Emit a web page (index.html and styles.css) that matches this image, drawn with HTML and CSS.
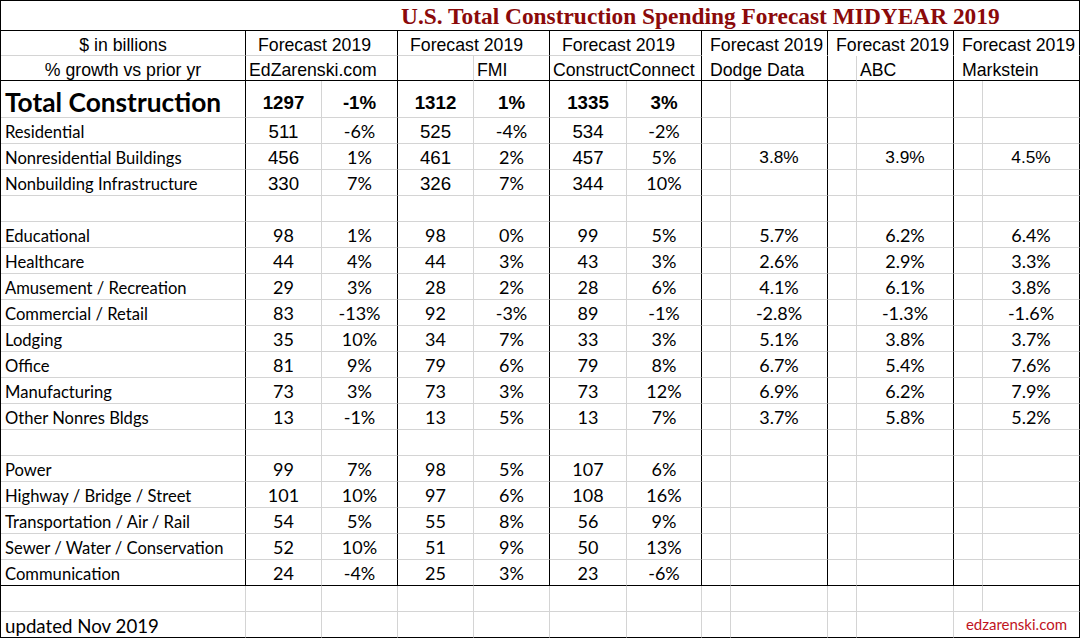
FILE: index.html
```html
<!DOCTYPE html>
<html>
<head>
<meta charset="utf-8">
<title>U.S. Total Construction Spending Forecast MIDYEAR 2019</title>
<link rel="stylesheet" href="styles.css">
</head>
<body>
<div class="sheet">
  <div class="row">
    <div class="c tpad"></div>
    <div class="c title">U.S. Total Construction Spending Forecast MIDYEAR 2019</div>
  </div>
  <div class="row head1">
    <div class="c h hl">$ in billions</div>
    <div class="c h g2 pl12">Forecast 2019</div>
    <div class="c h g2 pl12">Forecast 2019</div>
    <div class="c h g2 pl12">Forecast 2019</div>
    <div class="c h g2 pl8">Forecast 2019</div>
    <div class="c h g2 pl8">Forecast 2019</div>
    <div class="c h g2 pl8 nb">Forecast 2019</div>
  </div>
  <div class="row head2">
    <div class="c h hl">% growth vs prior yr</div>
    <div class="c h g2 pl3">EdZarenski.com</div>
    <div class="c h gray"></div>
    <div class="c h pl3">FMI</div>
    <div class="c h g2 pl3">ConstructConnect</div>
    <div class="c h g2 pl8">Dodge Data</div>
    <div class="c h gray"></div>
    <div class="c h pl3">ABC</div>
    <div class="c h g2 pl8">Markstein</div>
  </div>

  <div class="row body total">
    <div class="c lab big">Total Construction</div>
    <div class="c ar b">1297</div><div class="c ar b">-1%</div>
    <div class="c ar b">1312</div><div class="c ar b">1%</div>
    <div class="c ar b">1335</div><div class="c ar b">3%</div>
    <div class="c"></div><div class="c"></div>
    <div class="c"></div><div class="c"></div>
    <div class="c"></div><div class="c"></div>
  </div>
  <div class="row body">
    <div class="c lab">Residential</div>
    <div class="c ar">511</div><div class="c cal">-6%</div>
    <div class="c ar">525</div><div class="c cal">-4%</div>
    <div class="c ar">534</div><div class="c cal">-2%</div>
    <div class="c"></div><div class="c"></div>
    <div class="c"></div><div class="c"></div>
    <div class="c"></div><div class="c"></div>
  </div>
  <div class="row body">
    <div class="c lab">Nonresidential Buildings</div>
    <div class="c ar">456</div><div class="c cal">1%</div>
    <div class="c ar">461</div><div class="c cal">2%</div>
    <div class="c ar">457</div><div class="c cal">5%</div>
    <div class="c"></div><div class="c ar sm">3.8%</div>
    <div class="c"></div><div class="c ar sm">3.9%</div>
    <div class="c"></div><div class="c ar sm">4.5%</div>
  </div>
  <div class="row body">
    <div class="c lab">Nonbuilding Infrastructure</div>
    <div class="c ar">330</div><div class="c cal">7%</div>
    <div class="c ar">326</div><div class="c cal">7%</div>
    <div class="c ar">344</div><div class="c cal">10%</div>
    <div class="c"></div><div class="c"></div>
    <div class="c"></div><div class="c"></div>
    <div class="c"></div><div class="c"></div>
  </div>
  <div class="row body">
    <div class="c lab"></div>
    <div class="c"></div><div class="c"></div>
    <div class="c"></div><div class="c"></div>
    <div class="c"></div><div class="c"></div>
    <div class="c"></div><div class="c"></div>
    <div class="c"></div><div class="c"></div>
    <div class="c"></div><div class="c"></div>
  </div>
  <div class="row body">
    <div class="c lab">Educational</div>
    <div class="c cal">98</div><div class="c cal">1%</div>
    <div class="c cal">98</div><div class="c cal">0%</div>
    <div class="c cal">99</div><div class="c cal">5%</div>
    <div class="c"></div><div class="c cal">5.7%</div>
    <div class="c"></div><div class="c cal">6.2%</div>
    <div class="c"></div><div class="c cal">6.4%</div>
  </div>
  <div class="row body">
    <div class="c lab">Healthcare</div>
    <div class="c cal">44</div><div class="c cal">4%</div>
    <div class="c cal">44</div><div class="c cal">3%</div>
    <div class="c cal">43</div><div class="c cal">3%</div>
    <div class="c"></div><div class="c cal">2.6%</div>
    <div class="c"></div><div class="c cal">2.9%</div>
    <div class="c"></div><div class="c cal">3.3%</div>
  </div>
  <div class="row body">
    <div class="c lab">Amusement / Recreation</div>
    <div class="c cal">29</div><div class="c cal">3%</div>
    <div class="c cal">28</div><div class="c cal">2%</div>
    <div class="c cal">28</div><div class="c cal">6%</div>
    <div class="c"></div><div class="c cal">4.1%</div>
    <div class="c"></div><div class="c cal">6.1%</div>
    <div class="c"></div><div class="c cal">3.8%</div>
  </div>
  <div class="row body">
    <div class="c lab">Commercial / Retail</div>
    <div class="c cal">83</div><div class="c cal">-13%</div>
    <div class="c cal">92</div><div class="c cal">-3%</div>
    <div class="c cal">89</div><div class="c cal">-1%</div>
    <div class="c"></div><div class="c cal">-2.8%</div>
    <div class="c"></div><div class="c cal">-1.3%</div>
    <div class="c"></div><div class="c cal">-1.6%</div>
  </div>
  <div class="row body">
    <div class="c lab">Lodging</div>
    <div class="c cal">35</div><div class="c cal">10%</div>
    <div class="c cal">34</div><div class="c cal">7%</div>
    <div class="c cal">33</div><div class="c cal">3%</div>
    <div class="c"></div><div class="c cal">5.1%</div>
    <div class="c"></div><div class="c cal">3.8%</div>
    <div class="c"></div><div class="c cal">3.7%</div>
  </div>
  <div class="row body">
    <div class="c lab">Office</div>
    <div class="c cal">81</div><div class="c cal">9%</div>
    <div class="c cal">79</div><div class="c cal">6%</div>
    <div class="c cal">79</div><div class="c cal">8%</div>
    <div class="c"></div><div class="c cal">6.7%</div>
    <div class="c"></div><div class="c cal">5.4%</div>
    <div class="c"></div><div class="c cal">7.6%</div>
  </div>
  <div class="row body">
    <div class="c lab">Manufacturing</div>
    <div class="c cal">73</div><div class="c cal">3%</div>
    <div class="c cal">73</div><div class="c cal">3%</div>
    <div class="c cal">73</div><div class="c cal">12%</div>
    <div class="c"></div><div class="c cal">6.9%</div>
    <div class="c"></div><div class="c cal">6.2%</div>
    <div class="c"></div><div class="c cal">7.9%</div>
  </div>
  <div class="row body">
    <div class="c lab">Other Nonres Bldgs</div>
    <div class="c cal">13</div><div class="c cal">-1%</div>
    <div class="c cal">13</div><div class="c cal">5%</div>
    <div class="c cal">13</div><div class="c cal">7%</div>
    <div class="c"></div><div class="c cal">3.7%</div>
    <div class="c"></div><div class="c cal">5.8%</div>
    <div class="c"></div><div class="c cal">5.2%</div>
  </div>
  <div class="row body">
    <div class="c lab"></div>
    <div class="c"></div><div class="c"></div>
    <div class="c"></div><div class="c"></div>
    <div class="c"></div><div class="c"></div>
    <div class="c"></div><div class="c"></div>
    <div class="c"></div><div class="c"></div>
    <div class="c"></div><div class="c"></div>
  </div>
  <div class="row body">
    <div class="c lab">Power</div>
    <div class="c cal">99</div><div class="c cal">7%</div>
    <div class="c cal">98</div><div class="c cal">5%</div>
    <div class="c cal">107</div><div class="c cal">6%</div>
    <div class="c"></div><div class="c"></div>
    <div class="c"></div><div class="c"></div>
    <div class="c"></div><div class="c"></div>
  </div>
  <div class="row body">
    <div class="c lab">Highway / Bridge / Street</div>
    <div class="c cal">101</div><div class="c cal">10%</div>
    <div class="c cal">97</div><div class="c cal">6%</div>
    <div class="c cal">108</div><div class="c cal">16%</div>
    <div class="c"></div><div class="c"></div>
    <div class="c"></div><div class="c"></div>
    <div class="c"></div><div class="c"></div>
  </div>
  <div class="row body">
    <div class="c lab">Transportation / Air / Rail</div>
    <div class="c cal">54</div><div class="c cal">5%</div>
    <div class="c cal">55</div><div class="c cal">8%</div>
    <div class="c cal">56</div><div class="c cal">9%</div>
    <div class="c"></div><div class="c"></div>
    <div class="c"></div><div class="c"></div>
    <div class="c"></div><div class="c"></div>
  </div>
  <div class="row body">
    <div class="c lab">Sewer / Water / Conservation</div>
    <div class="c cal">52</div><div class="c cal">10%</div>
    <div class="c cal">51</div><div class="c cal">9%</div>
    <div class="c cal">50</div><div class="c cal">13%</div>
    <div class="c"></div><div class="c"></div>
    <div class="c"></div><div class="c"></div>
    <div class="c"></div><div class="c"></div>
  </div>
  <div class="row body last">
    <div class="c lab">Communication</div>
    <div class="c cal">24</div><div class="c cal">-4%</div>
    <div class="c cal">25</div><div class="c cal">3%</div>
    <div class="c cal">23</div><div class="c cal">-6%</div>
    <div class="c"></div><div class="c"></div>
    <div class="c"></div><div class="c"></div>
    <div class="c"></div><div class="c"></div>
  </div>

  <div class="row foot">
    <div class="c"></div>
    <div class="c"></div><div class="c"></div>
    <div class="c"></div><div class="c"></div>
    <div class="c"></div><div class="c"></div>
    <div class="c"></div><div class="c"></div>
    <div class="c"></div><div class="c"></div>
    <div class="c"></div><div class="c"></div>
  </div>
  <div class="row foot end">
    <div class="c lab upd">updated Nov 2019</div>
    <div class="c"></div><div class="c"></div>
    <div class="c"></div><div class="c"></div>
    <div class="c"></div><div class="c"></div>
    <div class="c"></div><div class="c"></div>
    <div class="c"></div><div class="c"></div>
    <div class="c g2 site">edzarenski.com</div>
  </div>
</div>
</body>
</html>
```

FILE: styles.css
```css
html, body {
  margin: 0;
  padding: 0;
  background: #ffffff;
  overflow: hidden;
}

.sheet {
  display: grid;
  grid-template-columns: 245px 76px 76px 76px 76px 77px 75px 29px 97px 29px 97px 29px 97px;
  grid-template-rows: 30px 25px 25px 37px repeat(20, 26px);
  width: max-content;
  border-left: 1px solid #000;
  border-top: 1px solid #000;
  color: #000;
  font-family: "Lato", "Liberation Sans", sans-serif;
}

.row {
  display: contents;
}

.c {
  box-sizing: border-box;
  min-width: 0;
  border-right: 1px solid #d4d4d4;
  border-bottom: 1px solid #d4d4d4;
  display: flex;
  align-items: flex-end;
  justify-content: center;
  white-space: nowrap;
  overflow: visible;
  line-height: 1.2;
}

/* title */
.tpad {
  grid-column: span 3;
  border-right: none;
  border-bottom-color: #000;
}
.title {
  grid-column: span 10;
  border-right-color: #000;
  border-bottom-color: #000;
  justify-content: flex-start;
  padding-left: 3px;
  font-family: "Liberation Serif", "Times New Roman", serif;
  font-weight: bold;
  font-size: 23.4px;
  color: #8b0a0a;
  line-height: 1.15;
}

/* header rows */
.h {
  font-family: "Liberation Sans", Arial, sans-serif;
  font-size: 17.7px;
  line-height: 1;
  border-right-color: #000;
  padding-bottom: 0;
}
.h.gray {
  border-right-color: #d4d4d4;
}
.g2 {
  grid-column: span 2;
}
.hl {
  justify-content: center;
}
.pl12 { justify-content: flex-start; padding-left: 12px; }
.pl8 { justify-content: flex-start; padding-left: 8px; }
.pl3 { justify-content: flex-start; padding-left: 3px; }

.head1 .h:nth-child(n+5) {
  border-bottom-color: #ffffff;
}
.head2 .c {
  border-bottom-color: #000;
}

/* body rows */
.body > .c:nth-child(odd) {
  border-right-color: #000;
}
.body.last > .c {
  border-bottom-color: #000;
}

.lab {
  justify-content: flex-start;
  padding-left: 4px;
  font-family: "Lato", sans-serif;
  font-size: 16.6px;
  padding-bottom: 0;
}
.lab.big {
  font-weight: bold;
  font-size: 26.3px;
  line-height: 1.1;
  padding-bottom: 0;
}
.lab.upd {
  font-size: 18.7px;
  padding-bottom: 0;
}

.ar {
  font-family: "Liberation Sans", Arial, sans-serif;
  font-size: 18.7px;
  padding-bottom: 0;
}
.ar.b {
  font-weight: bold;
  padding-bottom: 3px;
}
.ar.sm {
  font-size: 17.3px;
  padding-bottom: 1px;
}

.cal {
  font-family: "Lato", sans-serif;
  font-size: 18px;
  padding-bottom: 0;
}

/* footer rows */
.foot > .c:last-child {
  border-right-color: #000;
}
.foot.end > .c {
  border-bottom-color: #000;
}
.site {
  justify-content: flex-end;
  padding-right: 12px;
  font-family: "Lato", sans-serif;
  font-size: 15px;
  color: #c0141e;
  padding-bottom: 4px;
}
```
